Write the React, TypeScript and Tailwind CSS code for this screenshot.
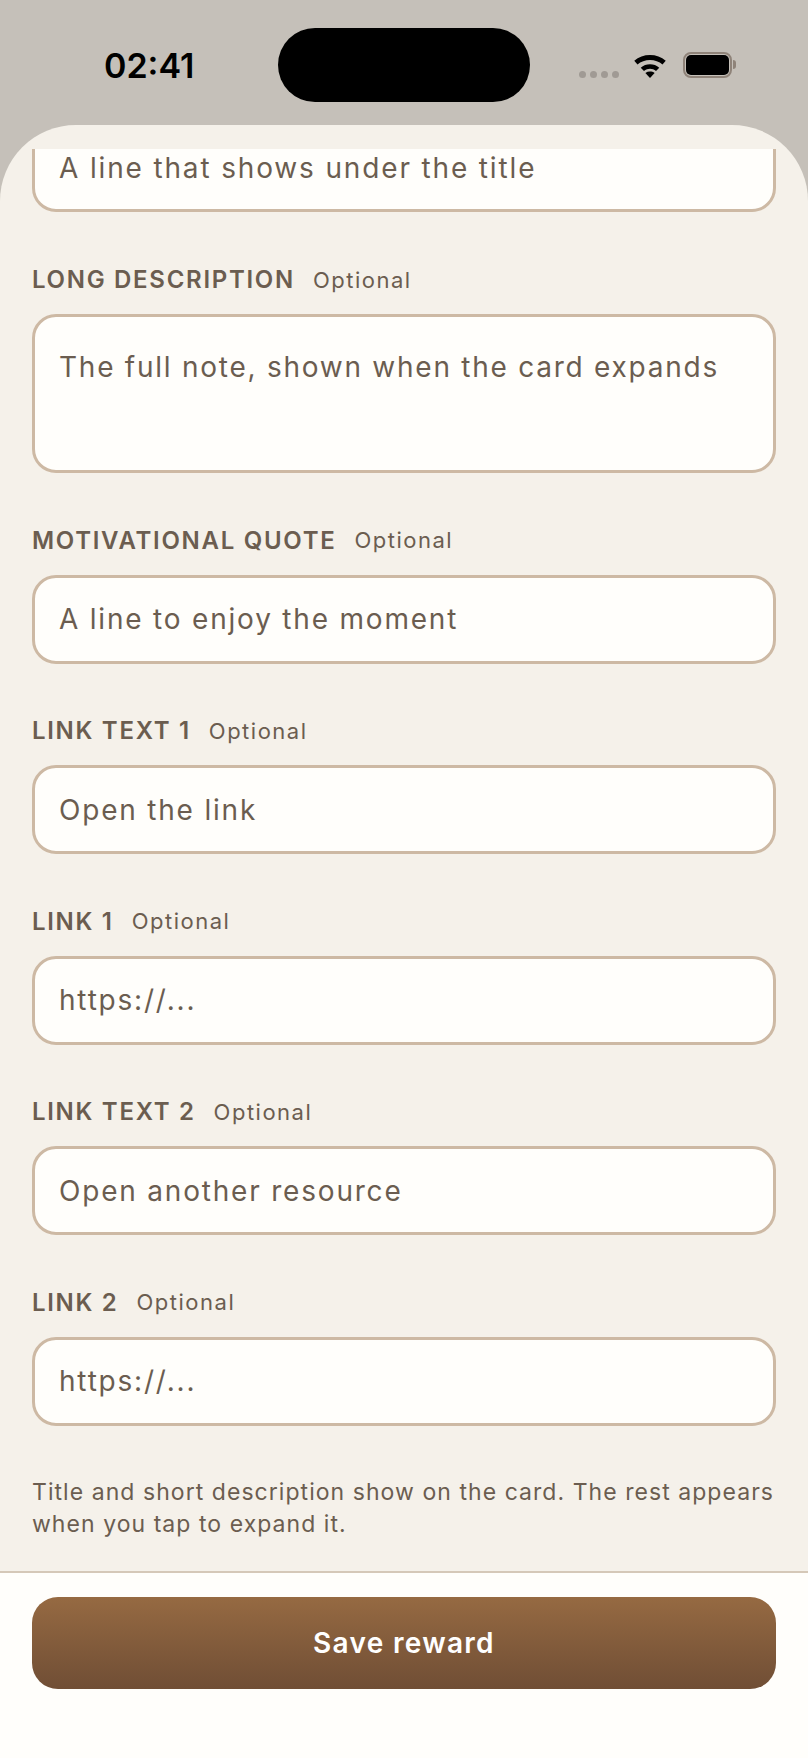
const Label = ({ text }: { text: string }) => (
  <div className="flex items-center h-[34px] gap-[18px] mb-[17px]">
    <span className="text-[24px] font-semibold tracking-[1.7px] text-[#6b5d50]">{text}</span>
    <span className="text-[22px] tracking-[1.5px] text-[#6b5d50]">Optional</span>
  </div>
);

const Field = ({ label, placeholder }: { label: string; placeholder: string }) => (
  <div className="mt-[50.5px] flex flex-col">
    <Label text={label} />
    <input
      placeholder={placeholder}
      className="h-[89px] w-full rounded-[24px] border-[3px] border-[#cdb9a4] bg-[#fffefb] px-[24px] text-[28px] tracking-[1.8px] text-[#6b5d50] placeholder:text-[#6b5d50] outline-none"
    />
  </div>
);

export default function App() {
  return (
    <div className="w-[808px] h-[1758px] flex flex-col bg-[#c5c0b9] overflow-hidden font-['Inter',sans-serif]">
      {/* status bar */}
      <div className="relative h-[125px] shrink-0">
        <span className="absolute left-[104px] top-[40px] text-[34px] font-semibold text-black">02:41</span>
        <div className="absolute left-[278px] top-[28px] w-[252px] h-[74px] rounded-[37px] bg-black" />
        <div className="absolute left-[579px] top-[71px] flex gap-[4px]">
          <i className="w-[7px] h-[7px] rounded-full bg-[#a09a94]" />
          <i className="w-[7px] h-[7px] rounded-full bg-[#a09a94]" />
          <i className="w-[7px] h-[7px] rounded-full bg-[#a09a94]" />
          <i className="w-[7px] h-[7px] rounded-full bg-[#a09a94]" />
        </div>
        <svg className="absolute left-[633px] top-[53px]" width="34" height="25" viewBox="0 0 36 27">
          <path d="M1 8.5C10 0 26 0 35 8.5L31.5 12.5C24.5 6 11.5 6 4.500 12.500Z" />
          <path d="M8 16C13.500 11 22.500 11 28 16L24.500 19.500C20.500 16 15.500 16 11.500 19.500Z" />
          <path d="M13 21.500C16 19.500 20 19.500 23 21.500L18 27Z" />
        </svg>
        <div className="absolute left-[683px] top-[52px] w-[49px] h-[26px] rounded-[8px] border-[2px] border-[#8f8379] p-[1px]">
          <div className="w-full h-full rounded-[5px] bg-black" />
        </div>
        <div className="absolute left-[733px] top-[60px] w-[3px] h-[9px] rounded-r-full bg-[#8f8379]" />
      </div>

      {/* sheet */}
      <div className="flex-1 flex flex-col rounded-t-[76px] bg-[#f5f1ea] min-h-0">
        <div className="h-[24px] shrink-0" />
        <div className="flex-1 min-h-0 overflow-hidden px-[32px]">
          <input
            placeholder="A line that shows under the title"
            className="-mt-[26px] h-[89px] block w-full rounded-[24px] border-[3px] border-[#cdb9a4] bg-[#fffefb] px-[24px] text-[28px] tracking-[1.85px] text-[#6b5d50] placeholder:text-[#6b5d50] outline-none"
          />
          <div className="mt-[51px] flex flex-col">
            <Label text="LONG DESCRIPTION" />
            <textarea
              placeholder="The full note, shown when the card expands"
              className="block h-[159px] w-full resize-none rounded-[24px] border-[3px] border-[#cdb9a4] bg-[#fffefb] px-[24px] py-[33px] text-[28px] leading-[34px] tracking-[1.75px] text-[#6b5d50] placeholder:text-[#6b5d50] outline-none"
            />
          </div>
          <Field label="MOTIVATIONAL QUOTE" placeholder="A line to enjoy the moment" />
          <Field label="LINK TEXT 1" placeholder="Open the link" />
          <Field label="LINK 1" placeholder="https://..." />
          <Field label="LINK TEXT 2" placeholder="Open another resource" />
          <Field label="LINK 2" placeholder="https://..." />
          <p className="mt-[50px] text-[23px] leading-[32px] tracking-[1.05px] text-[#6b5d50]">
            Title and short description show on the card. The rest appears when you tap to expand it.
          </p>
        </div>
        <div className="shrink-0 h-[187px] border-t-[2px] border-[#d5c8b8] bg-[#fffefb] px-[32px] pt-[24px]">
          <button className="w-full h-[92px] rounded-[26px] bg-gradient-to-b from-[#966a42] to-[#704e35] text-[28px] font-semibold tracking-[1.3px] text-white">
            Save reward
          </button>
        </div>
      </div>
    </div>
  );
}
